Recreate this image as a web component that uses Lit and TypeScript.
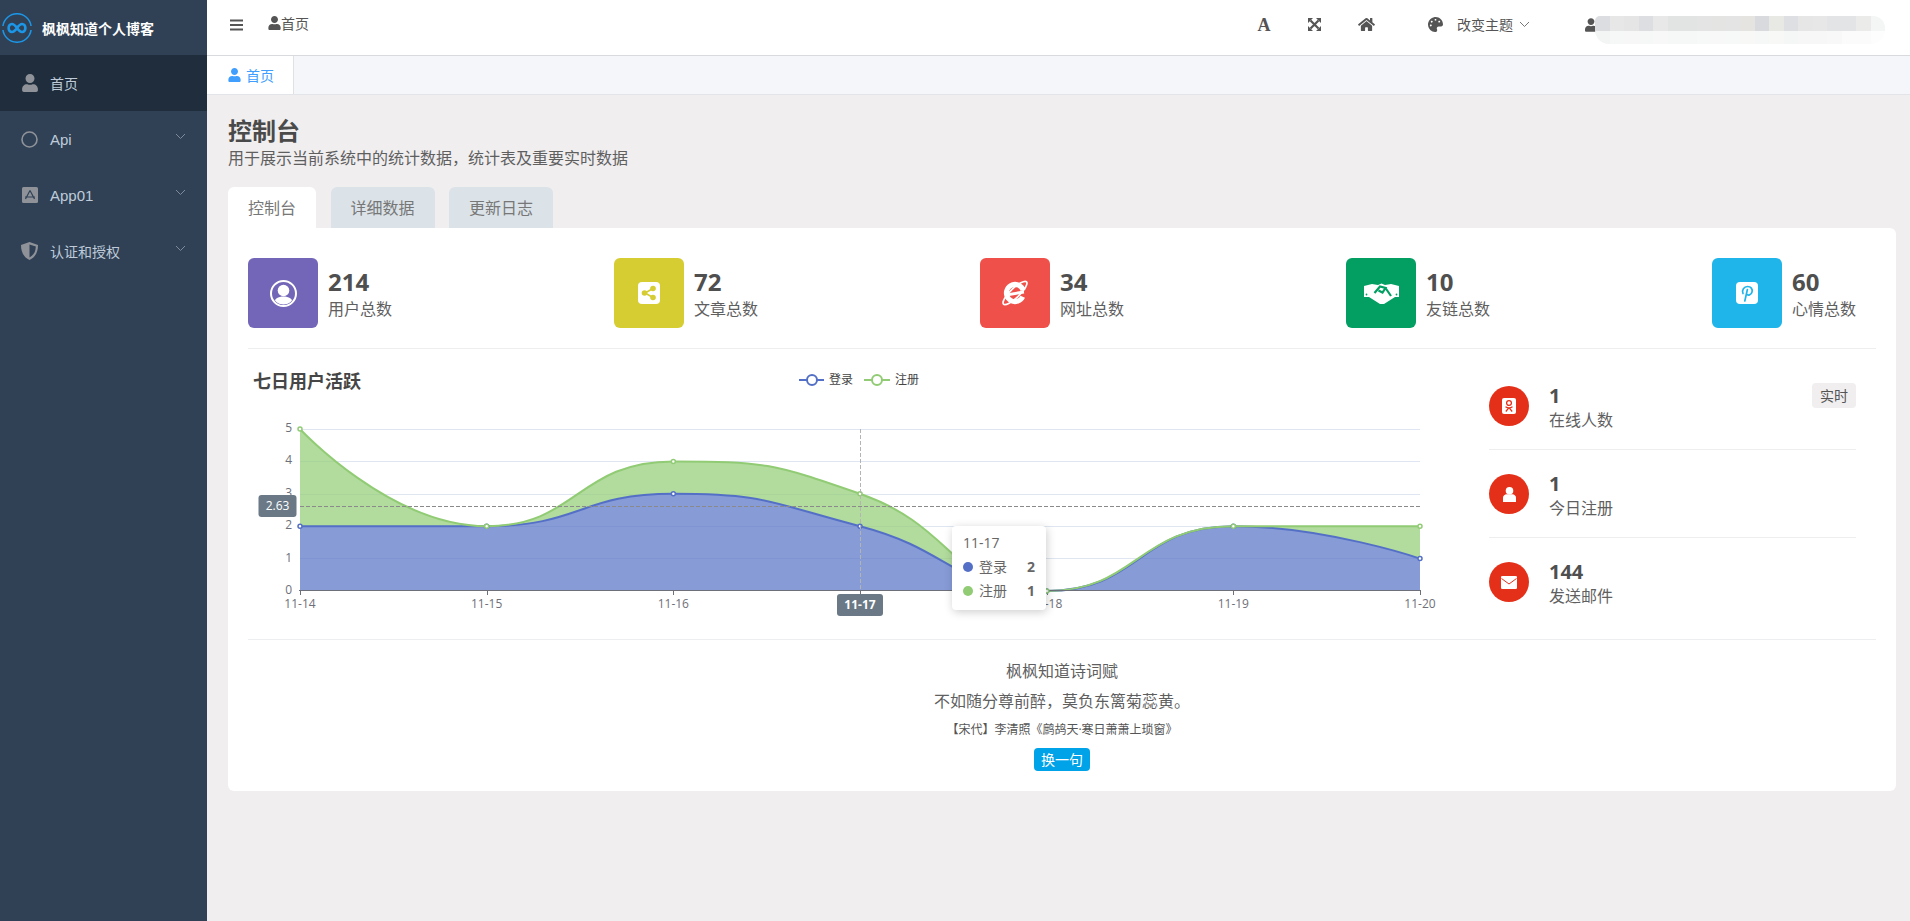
import { LitElement, html, svg, css } from 'lit';
import { customElement } from 'lit/decorators.js';

const FONT = `"Open Sans", "Noto Sans CJK SC", sans-serif`;

const USER = 'M224 256c70.7 0 128-57.3 128-128S294.7 0 224 0 96 57.3 96 128s57.3 128 128 128zm89.6 32h-16.7c-22.2 10.2-46.9 16-72.9 16s-50.6-5.8-72.9-16h-16.7C60.2 288 0 348.2 0 422.4V464c0 26.5 21.5 48 48 48h352c26.5 0 48-21.5 48-48v-41.6c0-74.2-60.2-134.4-134.4-134.4z';
const HOME = 'M280.37 148.26L96 300.11V464a16 16 0 0 0 16 16l112.06-.29a16 16 0 0 0 15.92-16V368a16 16 0 0 1 16-16h64a16 16 0 0 1 16 16v95.64a16 16 0 0 0 16 16.05L464 480a16 16 0 0 0 16-16V300L295.67 148.26a12.19 12.19 0 0 0-15.3 0zM571.6 251.47L488 182.56V44.05a12 12 0 0 0-12-12h-56a12 12 0 0 0-12 12v72.61L318.47 43a48 48 0 0 0-61 0L4.34 251.47a12 12 0 0 0-1.6 16.9l25.5 31A12 12 0 0 0 45.15 301l235.22-193.74a12.19 12.19 0 0 1 15.3 0L530.9 301a12 12 0 0 0 16.9-1.6l25.5-31a12 12 0 0 0-1.7-16.93z';
const PALETTE = 'M204.3 5C104.9 24.4 24.8 104.3 5.2 203.4c-37 187 131.7 326.4 258.8 306.7 41.2-6.4 61.4-54.6 42.5-91.7-23.1-45.4 9.9-98.4 60.9-98.4h79.7c35.8 0 64.8-29.6 64.9-65.3C511.5 97.1 368.1-26.9 204.3 5zM96 320c-17.7 0-32-14.3-32-32s14.3-32 32-32 32 14.3 32 32-14.3 32-32 32zm32-128c-17.7 0-32-14.3-32-32s14.3-32 32-32 32 14.3 32 32-14.3 32-32 32zm128-64c-17.7 0-32-14.3-32-32s14.3-32 32-32 32 14.3 32 32-14.3 32-32 32zm128 64c-17.7 0-32-14.3-32-32s14.3-32 32-32 32 14.3 32 32-14.3 32-32 32z';

const userIcon = (w: number, h: number, color = 'currentColor') =>
  html`<svg width=${w} height=${h} viewBox="0 0 448 512"><path fill=${color} d=${USER}></path></svg>`;

// same curve maths as the chart library: smooth 0.5, control points clamped to the segment
type Pt = [number, number];
const clamp = (v: number, a: number, b: number) => Math.max(Math.min(v, Math.max(a, b)), Math.min(a, b));

function curve(pts: Pt[], first = true) {
  const smooth = 0.5;
  let [cx0, cy0] = pts[0];
  let d = `${first ? 'M' : 'L'}${pts[0][0]} ${pts[0][1]}`;
  for (let i = 1; i < pts.length; i++) {
    const [px, py] = pts[i - 1];
    const [x, y] = pts[i];
    let nx0 = x, ny0 = y, cx1 = x, cy1 = y;
    if (i < pts.length - 1) {
      const [nx, ny] = pts[i + 1];
      const lenPrev = Math.hypot(x - px, y - py);
      const lenNext = Math.hypot(nx - x, ny - y);
      const ratio = lenNext / (lenNext + lenPrev);
      nx0 = clamp(x + (nx - px) * smooth * ratio, nx, x);
      ny0 = clamp(y + (ny - py) * smooth * ratio, ny, y);
      cx1 = clamp(x - ((nx0 - x) * lenPrev) / lenNext, px, x);
      cy1 = clamp(y - ((ny0 - y) * lenPrev) / lenNext, py, y);
      nx0 = x + ((x - cx1) * lenNext) / lenPrev;
      ny0 = y + ((y - cy1) * lenNext) / lenPrev;
    }
    d += `C${cx0} ${cy0} ${cx1} ${cy1} ${x} ${y}`;
    cx0 = nx0;
    cy0 = ny0;
  }
  return d;
}

@customElement('activity-chart')
export class ActivityChart extends LitElement {
  static styles = css`
    :host {
      display: block;
      position: relative;
      width: 1200px;
      height: 290px;
      font-family: ${css([FONT] as unknown as TemplateStringsArray)};
    }
    svg {
      display: block;
    }
    .title {
      font-size: 18px;
      font-weight: 700;
      fill: #464646;
    }
    .legend {
      font-size: 12px;
      fill: #444;
    }
    .tick {
      font-size: 12px;
      fill: #6e7079;
    }
    .pointer-label {
      font-size: 12px;
      fill: #fff;
    }
    .tooltip {
      position: absolute;
      left: 704px;
      top: 177px;
      width: 94px;
      height: 84px;
      box-sizing: border-box;
      padding: 7px 11px;
      background: #fff;
      border-radius: 4px;
      box-shadow: 1px 2px 10px rgba(0, 0, 0, 0.2);
      font-size: 14px;
      color: #666;
      line-height: 20px;
    }
    .tip-row {
      display: flex;
      align-items: center;
      height: 24px;
    }
    .tip-head {
      margin-bottom: 2px;
    }
    .dot {
      width: 10px;
      height: 10px;
      border-radius: 50%;
      margin-right: 6px;
    }
    .tip-val {
      margin-left: auto;
      font-weight: 700;
      font-size: 14px;
    }
  `;

  render() {
    const xs = [300, 486.67, 673.33, 860, 1046.67, 1233.33, 1420];
    const labels = ['11-14', '11-15', '11-16', '', '11-18', '11-19', '11-20'];
    const y0 = 591;
    const unit = 32.4;
    const toY = (v: number) => y0 - v * unit;
    const rows = [558.5, 526.5, 494.5, 461.5, 429.5];
    const login = [2, 2, 3, 2, 0, 2, 1];
    const reg = [3, 0, 1, 1, 0, 0, 1];
    const loginPts = login.map((v, i): Pt => [xs[i], toY(v)]);
    const topPts = login.map((v, i): Pt => [xs[i], toY(v + reg[i])]);
    const blue = '#5470c6';
    const green = '#91cc75';
    const greenArea = curve(topPts) + curve([...loginPts].reverse(), false) + 'Z';
    const blueArea = curve(loginPts) + `L1420 ${y0}L300 ${y0}Z`;

    return html`
      <svg width="1200" height="290" viewBox="248 349 1200 290">
        <text class="title" x="253" y="388">七日用户活跃</text>

        <path d="M799 380H824" stroke=${blue} stroke-width="2"></path>
        <circle cx="812" cy="380" r="5" fill="#fff" stroke=${blue} stroke-width="2"></circle>
        <text class="legend" x="829" y="384">登录</text>
        <path d="M864 380H890" stroke=${green} stroke-width="2"></path>
        <circle cx="877" cy="380" r="5" fill="#fff" stroke=${green} stroke-width="2"></circle>
        <text class="legend" x="895" y="384">注册</text>

        ${rows.map(y => svg`<path d="M300 ${y}H1420" stroke="#e0e6f1"></path>`)}
        ${[0, 1, 2, 3, 4, 5].map(
          v => svg`<text class="tick" x="292" y=${toY(v) + 3} text-anchor="end">${v}</text>`
        )}

        <path d=${blueArea} fill=${blue} fill-opacity="0.7"></path>
        <path d=${greenArea} fill=${green} fill-opacity="0.7"></path>
        <path d=${curve(loginPts)} fill="none" stroke=${blue} stroke-width="2"></path>
        <path d=${curve(topPts)} fill="none" stroke=${green} stroke-width="2"></path>

        <path d="M299 590.5H1420" stroke="#6e7079"></path>
        ${xs.map(
          (x, i) => svg`
            <path d="M${Math.round(x) + 0.5} 590V595" stroke="#6e7079"></path>
            <text class="tick" x=${x} y="608" text-anchor="middle">${labels[i]}</text>
          `
        )}
        ${loginPts.map(
          p => svg`<circle cx=${p[0]} cy=${p[1]} r="2" fill="#fff" stroke=${blue} stroke-width="1.5"></circle>`
        )}
        ${topPts.map(
          p => svg`<circle cx=${p[0]} cy=${p[1]} r="2" fill="#fff" stroke=${green} stroke-width="1.5"></circle>`
        )}

        <path d="M300 506.5H1420" stroke="#8a8a8a" stroke-dasharray="4 2"></path>
        <path d="M860.5 429V591" stroke="#b4b4b4" stroke-dasharray="4 2"></path>
        <rect x="258.5" y="495" width="38" height="22" rx="3" fill="#6a7985"></rect>
        <text class="pointer-label" x="277.5" y="510" text-anchor="middle">2.63</text>
        <rect x="837" y="594" width="46" height="22" rx="3" fill="#6a7985"></rect>
        <text class="pointer-label" x="860" y="609" text-anchor="middle" font-weight="700">11-17</text>
      </svg>
      <div class="tooltip">
        <div class="tip-head">11-17</div>
        <div class="tip-row"><span class="dot" style="background:${blue}"></span>登录<span class="tip-val">2</span></div>
        <div class="tip-row"><span class="dot" style="background:${green}"></span>注册<span class="tip-val">1</span></div>
      </div>
    `;
  }
}

@customElement('app-root')
export class AppRoot extends LitElement {
  static styles = css`
    :host {
      display: flex;
      height: 921px;
      overflow: hidden;
      background: #f0eeef;
      font-family: ${css([FONT] as unknown as TemplateStringsArray)};
      color: #555;
    }
    svg {
      display: block;
      flex: none;
    }

    /* sidebar */
    .side {
      width: 207px;
      flex: none;
      background: #304156;
      color: #bfcbd9;
      font-size: 14px;
    }
    .logo {
      height: 55px;
      display: flex;
      align-items: center;
      padding-left: 2px;
      gap: 10px;
      color: #fff;
      font-weight: 700;
      box-sizing: border-box;
    }
    .menu-item {
      height: 56px;
      display: flex;
      align-items: center;
      padding: 0 21px;
      box-sizing: border-box;
      position: relative;
    }
    .menu-item.active {
      background: #1f2d3d;
    }
    .menu-icon {
      width: 17px;
      margin-right: 12px;
      color: #8f9399;
      display: flex;
      justify-content: center;
    }
    .menu-arrow {
      margin-left: auto;
      margin-top: -6px;
    }
    .latin {
      font-family: "Liberation Sans", sans-serif;
      font-size: 15px;
    }

    /* right side */
    .right {
      flex: 1;
      min-width: 0;
      display: flex;
      flex-direction: column;
    }
    .top {
      height: 56px;
      flex: none;
      box-sizing: border-box;
      background: #fff;
      border-bottom: 1px solid #d8dadd;
      display: flex;
      align-items: center;
      position: relative;
      padding: 0 0 6px 23px;
      font-size: 14px;
    }
    .crumb {
      display: flex;
      align-items: center;
      margin-left: 25px;
      margin-top: -3px;
    }
    .tools {
      margin-left: auto;
      display: flex;
      align-items: center;
      padding-right: 25px;
    }
    .tool-a {
      font-family: "Liberation Serif", serif;
      font-weight: 700;
      font-size: 18px;
      line-height: 20px;
      width: 14px;
      text-align: center;
      margin-right: 37px;
    }
    .tool-x {
      margin-right: 37px;
    }
    .tool-home {
      margin-right: 53px;
    }
    .theme {
      margin: 0 6px 0 14px;
      line-height: 20px;
    }
    .who {
      margin-left: 55px;
      display: flex;
      align-items: center;
      position: relative;
      width: 300px;
    }
    .blur {
      position: absolute;
      left: 10px;
      top: -2px;
      width: 290px;
      height: 28px;
      border-radius: 5px 12px 14px 14px;
      overflow: hidden;
      display: grid;
      grid-template-columns: repeat(20, 1fr);
      grid-template-rows: 15px 13px;
    }

    .tabs-bar {
      height: 39px;
      flex: none;
      box-sizing: border-box;
      background: #f5f6fa;
      border-bottom: 1px solid #e2e4ea;
      display: flex;
    }
    .view-tab {
      width: 87px;
      height: 38px;
      box-sizing: border-box;
      padding-left: 21px;
      background: #fff;
      border-right: 1px solid #dfe1e6;
      color: #409eff;
      font-size: 14px;
      display: flex;
      align-items: center;
      gap: 5px;
    }

    .main {
      flex: 1;
      padding: 20px 14px 0 21px;
    }
    h1 {
      margin: 0;
      font-size: 24px;
      line-height: 32px;
      font-weight: 700;
      color: #4a4a4a;
    }
    .sub {
      font-size: 16px;
      line-height: 22px;
      color: #5f5f5f;
    }
    .pills {
      display: flex;
      gap: 14.5px;
      margin-top: 18px;
    }
    .pill {
      height: 41px;
      padding: 0 20px;
      background: #dbe3e9;
      border-radius: 6px 6px 0 0;
      font-size: 16px;
      line-height: 43px;
      color: #777;
    }
    .pill.on {
      background: #fff;
    }

    .card {
      background: #fff;
      border-radius: 0 6px 6px 6px;
      padding: 30px 20px 20px;
    }
    .stats {
      display: flex;
      justify-content: space-between;
      padding-bottom: 20px;
      border-bottom: 1px solid #eceef0;
    }
    .stat {
      width: 164px;
      display: flex;
      gap: 10px;
    }
    .stat-box {
      width: 70px;
      height: 70px;
      border-radius: 6px;
      display: flex;
      align-items: center;
      justify-content: center;
    }
    .stat-num {
      font-size: 24px;
      font-weight: 700;
      line-height: 32px;
      margin-top: 8px;
      color: #4f4f4f;
    }
    .stat-label {
      font-size: 16px;
      line-height: 22px;
      color: #5f5f5f;
    }

    .mid {
      display: flex;
      justify-content: space-between;
      height: 290px;
      border-bottom: 1px solid #eceef0;
    }
    .side-list {
      width: 367px;
      margin-right: 20px;
      padding-top: 13px;
    }
    .kpi {
      display: flex;
      padding: 24px 0 17px;
      border-bottom: 1px solid #eceef0;
    }
    .kpi:last-child {
      border-bottom: none;
    }
    .kpi-icon {
      width: 40px;
      height: 40px;
      border-radius: 50%;
      background: #e53019;
      display: flex;
      align-items: center;
      justify-content: center;
      margin-right: 20px;
      flex: none;
    }
    .kpi-text {
      margin-top: -1px;
    }
    .kpi-num {
      font-size: 20px;
      font-weight: 700;
      line-height: 22px;
      color: #4f4f4f;
    }
    .kpi-label {
      font-size: 16px;
      line-height: 24px;
      margin-top: 1px;
      color: #5f5f5f;
    }
    .badge {
      margin: -3px 0 0 auto;
      width: 44px;
      height: 25px;
      border-radius: 4px;
      background: #f0eeef;
      font-size: 14px;
      line-height: 25px;
      text-align: center;
      align-self: flex-start;
    }

    .poem {
      padding-top: 19px;
      text-align: center;
      font-size: 16px;
      line-height: 24px;
      color: #5f5f5f;
    }
    .poem-line {
      margin-top: 6px;
    }
    .poem-src {
      font-size: 12px;
      line-height: 18px;
      margin-top: 8px;
      color: #555;
    }
    .swap {
      display: block;
      margin: 9px auto 0;
      width: 56px;
      height: 23px;
      border-radius: 4px;
      background: #00a2e8;
      color: #fff;
      font-size: 14px;
      line-height: 23px;
    }
  `;

  private chevron(color: string, size = 11) {
    return html`<svg width=${size} height="7" viewBox="0 0 11 7">
      <path d="M1 1L5.5 5.5L10 1" fill="none" stroke=${color} stroke-width="1"></path>
    </svg>`;
  }

  private statIcon(kind: string) {
    if (kind === 'user') {
      return html`<svg width="27" height="27" viewBox="0 0 27 27">
        <defs><clipPath id="uc"><circle cx="13.5" cy="13.5" r="11"></circle></clipPath></defs>
        <circle cx="13.5" cy="13.5" r="12.5" fill="none" stroke="#fff" stroke-width="2"></circle>
        <g clip-path="url(#uc)" fill="#fff">
          <circle cx="13.5" cy="10.5" r="5.8"></circle>
          <path d="M3 27C3 19 8 16.5 13.5 16.5S24 19 24 27Z"></path>
        </g>
      </svg>`;
    }
    if (kind === 'share') {
      return html`<svg width="22" height="22" viewBox="0 0 22 22">
        <rect width="22" height="22" rx="4" fill="#fff"></rect>
        <path d="M7 11L15 6.5M7 11L15 15.5" stroke="#d6cd33" stroke-width="1.6"></path>
        <circle cx="6.5" cy="11" r="2.8" fill="#d6cd33"></circle>
        <circle cx="15" cy="6.5" r="2.8" fill="#d6cd33"></circle>
        <circle cx="15" cy="15.5" r="2.8" fill="#d6cd33"></circle>
      </svg>`;
    }
    if (kind === 'ie') {
      return html`<svg width="30" height="28" viewBox="0 0 30 28">
        <ellipse cx="15" cy="14" rx="16" ry="4.6" transform="rotate(-44 15 14)" fill="none" stroke="#fff" stroke-width="1.7"></ellipse>
        <g transform="rotate(-10 15 14)">
          <circle cx="15" cy="14" r="8.6" fill="none" stroke="#fff" stroke-width="5" stroke-dasharray="47 7" transform="rotate(36 15 14)"></circle>
          <path d="M7 13H24V16H7Z" fill="#fff"></path>
        </g>
      </svg>`;
    }
    if (kind === 'hands') {
      return html`<svg width="35" height="21" viewBox="0 0 35 21">
        <path d="M0 3L8 1L14 2L17.5 .5L21 2L27 1L35 3V14L31 14L20 21H16L5 14H0Z" fill="#fff"></path>
        <path d="M10.5 10L16 3.5L21.5 5L18.5 9.5L14.5 7.5M21.5 5L27 13" fill="none" stroke="#029e62" stroke-width="2.2"></path>
        <circle cx="2.5" cy="11.5" r=".9" fill="#029e62"></circle>
        <circle cx="32.5" cy="11.5" r=".9" fill="#029e62"></circle>
      </svg>`;
    }
    return html`<svg width="22" height="22" viewBox="0 0 22 22">
      <rect width="22" height="22" rx="4" fill="#fff"></rect>
      <path d="M7 11.5C5.5 8 8 4.5 11.5 4.5C15 4.5 16.8 7 16 10C15.3 13 11.8 14 10.6 11.8M11.4 7.5L8.8 19" fill="none" stroke="#20b5ea" stroke-width="1.7" stroke-linecap="round"></path>
    </svg>`;
  }

  private kpiIcon(kind: string) {
    if (kind === 'ok') {
      return html`<svg width="14" height="16" viewBox="0 0 14 16">
        <rect width="14" height="16" rx="2" fill="#fff"></rect>
        <circle cx="7" cy="5" r="2.4" fill="none" stroke="#e53019" stroke-width="1.3"></circle>
        <path d="M3.5 8.7C5.5 10 8.5 10 10.5 8.7M7 9.6L3.8 13.5M7 9.6L10.2 13.5" fill="none" stroke="#e53019" stroke-width="1.3"></path>
      </svg>`;
    }
    if (kind === 'user') {
      return html`<svg width="13" height="15" viewBox="0 0 13 15">
        <circle cx="6.5" cy="3.8" r="3.8" fill="#fff"></circle>
        <path d="M0 15V10.5C0 8.5 2 7.2 3.5 7.2H9.5C11 7.2 13 8.5 13 10.5V15Z" fill="#fff"></path>
      </svg>`;
    }
    return html`<svg width="16" height="13" viewBox="0 0 16 13">
      <rect width="16" height="13" rx="1.2" fill="#fff"></rect>
      <path d="M.5 2.5L8 8L15.5 2.5" fill="none" stroke="#e53019" stroke-width="1"></path>
    </svg>`;
  }

  render() {
    const gray = '#8f9399';
    const menus = [
      {
        name: 'Api',
        latin: true,
        icon: html`<svg width="17" height="17" viewBox="0 0 17 17"><circle cx="8.5" cy="8.5" r="7.5" fill="none" stroke=${gray} stroke-width="1.6"></circle></svg>`,
      },
      {
        name: 'App01',
        latin: true,
        icon: html`<svg width="16" height="16" viewBox="0 0 16 16">
          <rect width="16" height="16" rx="1.5" fill=${gray}></rect>
          <path d="M8 3.5L3.5 12M8 3.5L12.5 12M3 10H13" fill="none" stroke="#304156" stroke-width="1.2"></path>
        </svg>`,
      },
      {
        name: '认证和授权',
        latin: false,
        icon: html`<svg width="17" height="18" viewBox="0 0 17 18">
          <path d="M8.5 0L17 3C17 10 14.5 15 8.5 18C2.5 15 0 10 0 3Z" fill=${gray}></path>
          <path d="M8.5 2.6V15.4C13 13 14.6 9.5 14.8 4.5Z" fill="#304156"></path>
        </svg>`,
      },
    ];
    const stats = [
      { bg: '#7366b8', icon: 'user', num: '214', label: '用户总数' },
      { bg: '#d6cd33', icon: 'share', num: '72', label: '文章总数' },
      { bg: '#f0504a', icon: 'ie', num: '34', label: '网址总数' },
      { bg: '#029e62', icon: 'hands', num: '10', label: '友链总数' },
      { bg: '#20b5ea', icon: 'pin', num: '60', label: '心情总数' },
    ];
    const kpis = [
      { icon: 'ok', num: '1', label: '在线人数', badge: true },
      { icon: 'user', num: '1', label: '今日注册', badge: false },
      { icon: 'mail', num: '144', label: '发送邮件', badge: false },
    ];
    // pixelated user name, sampled by eye from the picture
    const blur = [
      '#dcdde0', '#e6e7e6', '#e4e5e4', '#dcdee2', '#e7e8e7', '#e2e3e3', '#e2e3e3', '#e3e4e3', '#e4e4e3', '#e3e4e3',
      '#e6e4e1', '#d9dadd', '#e8e8e4', '#dddfe3', '#e6e6e6', '#e7e7e7', '#e3e4e6', '#e3e4e6', '#ebebea', '#f4f5f5',
      '#f3f4f4', '#f6f7f7', '#f7f7f7', '#f6f7f7', '#f8f8f8', '#f6f7f7', '#f6f8f7', '#f7f8f8', '#f8f8f8', '#f7f8f8',
      '#f8f8f7', '#f6f7f7', '#f8f8f7', '#f5f6f6', '#f7f7f7', '#f7f7f7', '#f8f8f8', '#fbfbfb', '#fbfbfb', '#fdfdfd',
    ];

    return html`
      <aside class="side">
        <div class="logo">
          <svg width="30" height="30" viewBox="0 0 30 30">
            <path d="M.94 13A14.2 14.2 0 0 1 29.06 13M29.06 17A14.2 14.2 0 0 1 .94 17" fill="none" stroke="#1c96e6" stroke-width="1.6"></path>
            <path d="M15 15C13 12.2 11.5 11 9.9 11C8 11 6.6 12.8 6.6 15S8 19 9.9 19C11.5 19 13 17.8 15 15C17 12.2 18.5 11 20.1 11C22 11 23.4 12.8 23.4 15S22 19 20.1 19C18.5 19 17 17.8 15 15Z" fill="none" stroke="#1c96e6" stroke-width="2.6"></path>
          </svg>
          <span>枫枫知道个人博客</span>
        </div>
        <div class="menu-item active">
          <span class="menu-icon">${userIcon(16, 18, gray)}</span>首页
        </div>
        ${menus.map(
          m => html`<div class="menu-item">
            <span class="menu-icon">${m.icon}</span><span class=${m.latin ? 'latin' : ''}>${m.name}</span>
            <span class="menu-arrow">${this.chevron('#7e8b9c')}</span>
          </div>`
        )}
      </aside>

      <div class="right">
        <header class="top">
          <svg width="13" height="12" viewBox="0 0 13 12">
            <path d="M0 1.5H13M0 6H13M0 10.5H13" stroke="#555" stroke-width="2"></path>
          </svg>
          <div class="crumb">${userIcon(13, 14, '#555')}首页</div>
          <div class="tools">
            <span class="tool-a">A</span>
            <svg class="tool-x" width="13" height="13" viewBox="0 0 13 13">
              <path d="M2.5 2.5L10.5 10.5M10.5 2.5L2.5 10.5" stroke="#555" stroke-width="2.2"></path>
              <path d="M0 0H5L0 5ZM13 0H8L13 5ZM0 13H5L0 8ZM13 13H8L13 8Z" fill="#555"></path>
            </svg>
            <svg class="tool-home" width="17" height="15" viewBox="0 0 576 512"><path fill="#555" d=${HOME}></path></svg>
            <svg width="15" height="15" viewBox="0 0 512 512"><path fill="#555" d=${PALETTE}></path></svg>
            <span class="theme">改变主题</span>
            ${this.chevron('#777')}
            <div class="who">
              ${userIcon(12, 14, '#555')}
              <div class="blur">
                ${blur.map(c => html`<span style="background:${c}"></span>`)}
              </div>
            </div>
          </div>
        </header>

        <div class="tabs-bar">
          <div class="view-tab">${userIcon(13, 14, '#409eff')}首页</div>
        </div>

        <main class="main">
          <h1>控制台</h1>
          <div class="sub">用于展示当前系统中的统计数据，统计表及重要实时数据</div>
          <div class="pills">
            <div class="pill on">控制台</div>
            <div class="pill">详细数据</div>
            <div class="pill">更新日志</div>
          </div>

          <section class="card">
            <div class="stats">
              ${stats.map(
                s => html`<div class="stat">
                  <div class="stat-box" style="background:${s.bg}">${this.statIcon(s.icon)}</div>
                  <div>
                    <div class="stat-num">${s.num}</div>
                    <div class="stat-label">${s.label}</div>
                  </div>
                </div>`
              )}
            </div>

            <div class="mid">
              <activity-chart></activity-chart>
              <div class="side-list">
                ${kpis.map(
                  k => html`<div class="kpi">
                    <div class="kpi-icon">${this.kpiIcon(k.icon)}</div>
                    <div class="kpi-text">
                      <div class="kpi-num">${k.num}</div>
                      <div class="kpi-label">${k.label}</div>
                    </div>
                    ${k.badge ? html`<div class="badge">实时</div>` : ''}
                  </div>`
                )}
              </div>
            </div>

            <div class="poem">
              <div>枫枫知道诗词赋</div>
              <div class="poem-line">不如随分尊前醉，莫负东篱菊蕊黄。</div>
              <div class="poem-src">【宋代】李清照《鹧鸪天·寒日萧萧上琐窗》</div>
              <div class="swap">换一句</div>
            </div>
          </section>
        </main>
      </div>
    `;
  }
}
